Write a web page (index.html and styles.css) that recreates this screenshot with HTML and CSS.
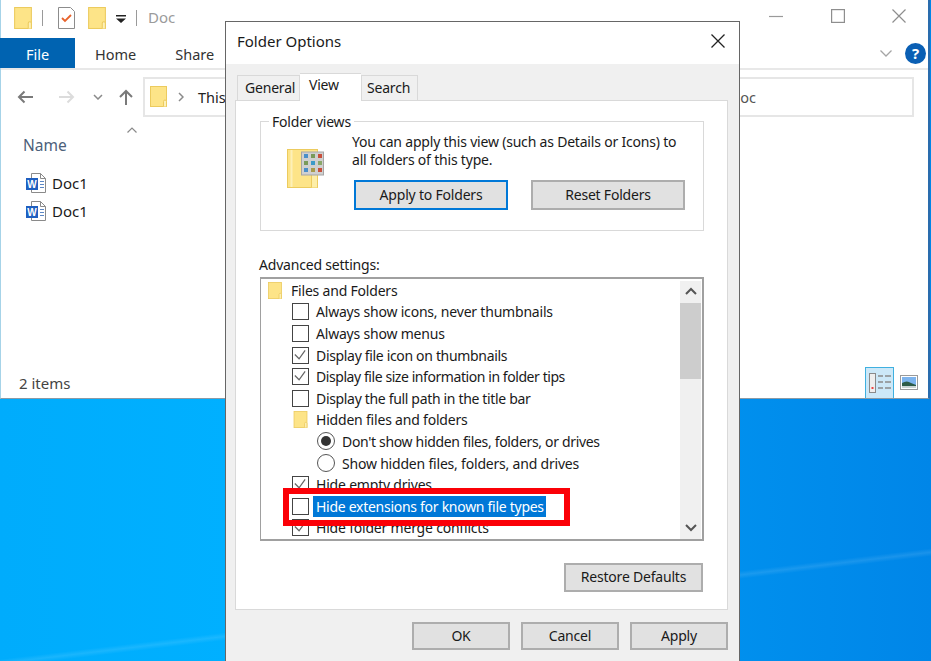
FILE: index.html
```html
<!DOCTYPE html>
<html lang="en">
<head>
<meta charset="utf-8">
<title>Folder Options</title>
<link rel="stylesheet" href="styles.css">
</head>
<body>
<svg class="defs" width="0" height="0" aria-hidden="true">
  <defs>
    <symbol id="folder" viewBox="0 0 17 21">
      <rect x=".5" y=".5" width="16" height="20" fill="#fde488" stroke="#eccb5e"/>
      <path d="M13.500 20.500v-5a1.500 1.500 0 0 1 3 0v5" fill="#fdf0b8" stroke="#eccb5e"/>
    </symbol>
    <symbol id="word" viewBox="0 0 22 22">
      <path d="M6.500 1.500h9l5 5v14h-14z" fill="#fff" stroke="#8a8a8a"/>
      <path d="M15.500 1.500v5h5" fill="none" stroke="#8a8a8a"/>
      <path d="M15 9.500h4M15 12.500h4M15 15.500h4" stroke="#5c87c4"/>
      <rect x="1" y="6" width="12" height="12" fill="#1f5fc0"/>
      <text x="7" y="15.500" class="word-letter">W</text>
    </symbol>
    <symbol id="check" viewBox="0 0 15 15">
      <path d="M2 7l4.500 4.500 6.500-9" fill="none" stroke="#666" stroke-width="1.300"/>
    </symbol>
  </defs>
</svg>

<main class="desktop">
  <section class="explorer">
    <header class="titlebar">
      <svg class="ico-title"><use href="#folder"/></svg>
      <span class="pipe"></span>
      <svg class="ico-props" viewBox="0 0 17 22">
        <path d="M.5.500h12l4 4v17H.5z" fill="#fff" stroke="#8c8c8c"/>
        <path d="M4 11l3 3 6-6" fill="none" stroke="#e8632c" stroke-width="1.800"/>
      </svg>
      <svg class="ico-title ico-second"><use href="#folder"/></svg>
      <svg class="ico-qat" viewBox="0 0 10 9">
        <path d="M0 0h10v1.500H0zM0 3.500h10L5 8z" fill="#222"/>
      </svg>
      <span class="pipe pipe-second"></span>
      <span class="win-title">Doc</span>
      <div class="win-controls">
        <svg class="ctl" viewBox="0 0 14 14"><path d="M0 7.500h14" stroke="#9a9a9a" stroke-width="1.200"/></svg>
        <svg class="ctl" viewBox="0 0 14 14"><rect x=".6" y=".6" width="12.800" height="12.800" fill="none" stroke="#8e8e8e" stroke-width="1.200"/></svg>
        <svg class="ctl" viewBox="0 0 14 14"><path d="M.5.500l13 13M13.500.500l-13 13" stroke="#8e8e8e" stroke-width="1.200"/></svg>
      </div>
    </header>

    <nav class="ribbon">
      <span class="tab-file">File</span>
      <span class="tab-home">Home</span>
      <span class="tab-share">Share</span>
      <svg class="ribbon-chevron" viewBox="0 0 12 7"><path d="M.5.500L6 6l5.500-5.500" fill="none" stroke="#a5a5a5" stroke-width="1.300"/></svg>
      <span class="help">?</span>
    </nav>

    <div class="navbar">
      <svg class="nav-ico" viewBox="0 0 16 14"><path d="M16 7H2M7.500 1.500L2 7l5.500 5.500" fill="none" stroke="#7a7a7a" stroke-width="2"/></svg>
      <svg class="nav-ico nav-forward" viewBox="0 0 16 14"><path d="M0 7h14M8.500 1.500L14 7l-5.500 5.500" fill="none" stroke="#dcdcdc" stroke-width="2"/></svg>
      <svg class="nav-drop" viewBox="0 0 10 6"><path d="M1 1l4 4 4-4" fill="none" stroke="#8a8a8a" stroke-width="1.500"/></svg>
      <svg class="nav-ico nav-up" viewBox="0 0 16 16"><path d="M8 16V2M2 8l6-6 6 6" fill="none" stroke="#7a7a7a" stroke-width="2"/></svg>
      <div class="address">
        <svg class="ico-addr"><use href="#folder"/></svg>
        <svg class="addr-sep" viewBox="0 0 6 10"><path d="M1 1l4 4-4 4" fill="none" stroke="#8a8a8a" stroke-width="1.500"/></svg>
        <span class="addr-text">This</span>
        <span class="addr-end">oc</span>
      </div>
    </div>

    <div class="files">
      <svg class="sort-caret" viewBox="0 0 10 6"><path d="M.5 5.500L5 1l4.500 4.500" fill="none" stroke="#8a8a8a" stroke-width="1.200"/></svg>
      <div class="col-name">Name</div>
      <div class="file"><svg class="ico-word"><use href="#word"/></svg>Doc1</div>
      <div class="file"><svg class="ico-word"><use href="#word"/></svg>Doc1</div>
    </div>

    <footer class="statusbar">
      <span>2 items</span>
      <div class="views">
        <span class="view-details">
          <svg viewBox="0 0 24 24" width="24" height="24">
            <rect x="1.500" y="2.500" width="6" height="19" fill="#eee" stroke="#8a8a8a"/>
            <path d="M10 5h5M17 5h6M10 11h5M17 11h6M10 17h5M17 17h6" stroke="#8a8a8a" stroke-width="1.500"/>
            <rect x="3.500" y="16" width="2" height="2" fill="#e44"/>
          </svg>
        </span>
        <svg class="view-large" viewBox="0 0 18 15">
          <rect x=".5" y=".5" width="17" height="14" fill="#fff" stroke="#9a9a9a"/>
          <rect x="2" y="2" width="14" height="11" fill="#7db4ee"/>
          <path d="M2 8q5-3 9 0l5 2v3H2z" fill="#2d5b47"/>
          <rect x="2" y="11" width="14" height="2" fill="#c9d3d3"/>
        </svg>
      </div>
    </footer>
  </section>

  <section class="dialog">
    <header class="dlg-title">
      <span>Folder Options</span>
      <svg class="dlg-close" viewBox="0 0 14 14"><path d="M.5.500l13 13M13.500.500l-13 13" stroke="#222" stroke-width="1.300"/></svg>
    </header>
    <div class="dlg-body">
      <div class="tabs">
        <span class="tab tab-general">General</span>
        <span class="tab tab-active">View</span>
        <span class="tab tab-search">Search</span>
      </div>
      <div class="panel">
        <fieldset class="group">
          <legend>Folder views</legend>
          <svg class="ico-views" viewBox="0 0 37 39">
            <rect x=".5" y=".5" width="30" height="38" fill="#fde488" stroke="#eccb5e"/>
            <path d="M24.500 38.500V8h6v30.500" fill="#fdeea8" stroke="#eccb5e"/>
            <path d="M4.500 1v37" stroke="#fdf0b8" stroke-width="2"/>
            <rect x="14.500" y="3" width="22" height="23" fill="#d0d0d0" stroke="#a5a5a5"/>
            <rect x="17" y="5" width="4" height="4" fill="#4a8fc8"/><rect x="24" y="5" width="4" height="4" fill="#7a9a5a"/><rect x="31" y="5" width="4" height="4" fill="#c8503c"/>
            <rect x="17" y="12" width="4" height="4" fill="#7a9a5a"/><rect x="24" y="12" width="4" height="4" fill="#3c9ac8"/><rect x="31" y="12" width="4" height="4" fill="#8aa86a"/>
            <rect x="17" y="19" width="4" height="4" fill="#4a8fc8"/><rect x="24" y="19" width="4" height="4" fill="#a89a4c"/><rect x="31" y="19" width="4" height="4" fill="#c8503c"/>
          </svg>
          <div class="views-right">
            <p class="views-text">You can apply this view (such as Details or Icons) to<br>all folders of this type.</p>
            <div class="views-btns">
              <button class="btn btn-default" type="button">Apply to Folders</button>
              <button class="btn btn-reset" type="button">Reset Folders</button>
            </div>
          </div>
        </fieldset>

        <div class="adv-label">Advanced settings:</div>
        <div class="list">
          <div class="rows">
            <div class="row"><svg class="ico-list"><use href="#folder"/></svg><span class="t-root">Files and Folders</span></div>
            <div class="row lvl1"><i class="cb"></i><span class="t">Always show icons, never thumbnails</span></div>
            <div class="row lvl1"><i class="cb"></i><span class="t">Always show menus</span></div>
            <div class="row lvl1"><i class="cb"><svg><use href="#check"/></svg></i><span class="t t-tight">Display file icon on thumbnails</span></div>
            <div class="row lvl1"><i class="cb"><svg><use href="#check"/></svg></i><span class="t t-tighter">Display file size information in folder tips</span></div>
            <div class="row lvl1"><i class="cb"></i><span class="t t-tight">Display the full path in the title bar</span></div>
            <div class="row lvl1"><svg class="ico-list ico-sub"><use href="#folder"/></svg><span class="t">Hidden files and folders</span></div>
            <div class="row lvl2"><i class="rb rb-on"></i><span class="t t-tight">Don't show hidden files, folders, or drives</span></div>
            <div class="row lvl2"><i class="rb"></i><span class="t">Show hidden files, folders, and drives</span></div>
            <div class="row lvl1"><i class="cb"><svg><use href="#check"/></svg></i><span class="t">Hide empty drives</span></div>
            <div class="row lvl1"><i class="cb"></i><span class="t t-sel">Hide extensions for known file types</span></div>
            <div class="row lvl1"><i class="cb"><svg><use href="#check"/></svg></i><span class="t">Hide folder merge conflicts</span></div>
          </div>
          <div class="scrollbar">
            <svg class="sb-arrow" viewBox="0 0 12 8"><path d="M1 7l5-5 5 5" fill="none" stroke="#555" stroke-width="2"/></svg>
            <div class="sb-thumb"></div>
            <svg class="sb-arrow sb-down" viewBox="0 0 12 8"><path d="M1 1l5 5 5-5" fill="none" stroke="#555" stroke-width="2"/></svg>
          </div>
          <div class="callout"></div>
        </div>
        <div class="restore-row"><button class="btn btn-restore" type="button">Restore Defaults</button></div>
      </div>
      <div class="dlg-actions">
        <button class="btn btn-act" type="button">OK</button>
        <button class="btn btn-act" type="button">Cancel</button>
        <button class="btn btn-act" type="button">Apply</button>
      </div>
    </div>
  </section>
</main>
</body>
</html>
```
FILE: styles.css
```css
* { box-sizing: border-box; }
html, body { margin: 0; height: 100%; overflow: hidden; }
body { font-family: "Noto Sans", "Liberation Sans", sans-serif; font-size: 14.5px; color: #1a1a1a; }
.defs { position: absolute; }
.word-letter { font: bold 10px "Liberation Sans", sans-serif; fill: #fff; text-anchor: middle; }

.desktop {
  position: relative;
  width: 931px;
  height: 661px;
  overflow: hidden;
  background:
    linear-gradient(-6.8deg, transparent 104px, rgba(255, 255, 255, .1) 108px, transparent 112px),
    linear-gradient(90deg, #00acfc 0%, #00b0ff 25%, #0090ee 78%, #0086e8 100%);
}

/* Explorer window */
.explorer {
  position: absolute;
  left: 0;
  top: 0;
  width: 930px;
  height: 399px;
  background: #fff;
  border-left: 1px solid #a6d3e8;
  border-right: 2px solid #2a6cad;
  border-bottom: 1px solid #8a9aa6;
  display: flex;
  flex-direction: column;
}
.titlebar { height: 38px; display: flex; align-items: center; padding-left: 13px; }
.ico-title { width: 18px; height: 22px; margin-top: -3px; }
.pipe { width: 1px; height: 16px; background: #9a9a9a; margin: -2px 0 0 10px; }
.ico-props { width: 17px; height: 22px; margin: -2px 0 0 15px; }
.ico-second { margin-left: 13px; }
.ico-qat { width: 10px; height: 9px; margin-left: 10px; }
.pipe-second { margin-left: 10px; }
.win-title { margin: -5px 0 0 11px; color: #9b9b9b; font-size: 15px; }
.win-controls { margin-left: auto; display: flex; gap: 47.5px; padding-right: 22px; margin-top: -6px; }
.ctl { width: 14px; height: 14px; }

.ribbon { height: 32px; display: flex; align-items: center; border-bottom: 2px solid #e8e8e8; }
.tab-file { width: 75px; height: 100%; background: #0063b1; color: #fff; display: flex; align-items: center; justify-content: center; margin-left: -1px; padding-top: 2px; }
.tab-home { margin: 2px 0 0 20px; color: #333; }
.tab-share { margin: 2px 0 0 39px; color: #333; }
.ribbon-chevron { width: 12px; height: 7px; margin-left: auto; margin-right: 13px; }
.help { width: 21px; height: 21px; border-radius: 50%; background: #0a5fb4; color: #fff; font-weight: 700; font-size: 15px; display: flex; align-items: center; justify-content: center; margin-right: 2px; }

.navbar { height: 47px; display: flex; align-items: center; padding: 6px 14px 0 16px; }
.nav-ico { width: 16px; height: 14px; }
.nav-forward { margin-left: 26px; }
.nav-drop { width: 10px; height: 6px; margin-left: 18px; }
.nav-up { width: 16px; height: 16px; margin-left: 15px; }
.address { flex: 1; height: 40px; margin-left: 9px; border: 2px solid #e6e6e6; display: flex; align-items: center; padding-left: 5px; }
.ico-addr { width: 17px; height: 21px; }
.addr-sep { width: 6px; height: 10px; margin-left: 11px; }
.addr-text { margin-left: 14px; color: #222; }
.addr-end { margin-left: auto; margin-right: 156px; color: #555; }

.files { flex: 1; padding-left: 22px; position: relative; }
.sort-caret { position: absolute; left: 126px; top: 10px; width: 10px; height: 6px; }
.col-name { color: #4c607a; font-size: 15.5px; margin-top: 18px; line-height: 20px; height: 34px; }
.file { display: flex; align-items: center; height: 28px; gap: 5px; font-size: 15px; }
.ico-word { width: 22px; height: 22px; margin-left: 2px; }

.statusbar { height: 31px; display: flex; align-items: center; padding-left: 18px; color: #444; font-size: 15px; }
.views { margin-left: auto; display: flex; align-items: center; gap: 6px; padding-right: 10px; align-self: stretch; }
.view-details { width: 29px; height: 100%; background: #cce8f8; border: 1px solid #3fb0e0; border-bottom: 0; display: flex; align-items: center; justify-content: center; }
.view-large { width: 18px; height: 15px; }

/* Dialog */
.dialog {
  position: absolute;
  left: 225px;
  top: 21px;
  width: 515px;
  height: 660px;
  background: #f0f0f0;
  border: 1px solid #666;
  display: flex;
  flex-direction: column;
  font-size: 14px;
  letter-spacing: -.2px;
}
.dlg-title { height: 42px; background: #fff; display: flex; align-items: center; justify-content: space-between; padding: 0 14px 5px 11px; flex: none; font-size: 15px; letter-spacing: 0; }
.dlg-close { width: 14px; height: 14px; margin-top: 1px; }
.dlg-body { flex: 1; padding: 9px 11px 0 9px; }
.tabs { display: flex; align-items: flex-end; height: 27px; padding-left: 2px; position: relative; z-index: 1; }
.tab { height: 25px; background: #f0f0f0; border: 1px solid #d9d9d9; border-bottom: 0; line-height: 24px; }
.tab-general { width: 63px; padding-left: 7px; }
.tab-active { width: 61px; height: 28px; margin-bottom: -1px; background: #fff; padding-left: 9px; line-height: 22px; border-right: 0; border-left: 0; }
.tab-search { width: 57px; padding-left: 5px; }

.panel { background: #fff; border: 1px solid #d9d9d9; height: 510px; padding: 12px 23px 0 24px; }
.group { margin: 0; height: 118px; border: 1px solid #d9d9d9; padding: 0; display: flex; min-width: 0; }
.group legend { padding: 0 3px; margin-left: 8px; line-height: 17px; }
.ico-views { width: 37px; height: 39px; margin: 19px 0 0 26px; flex: none; }
.views-right { margin-left: 28px; }
.views-text { margin: 3px 0 0; line-height: 18px; }
.views-btns { display: flex; gap: 23px; margin: 11px 0 0 2px; }

.btn { font: inherit; letter-spacing: inherit; color: #1a1a1a; background: #e1e1e1; border: 2px solid #adadad; padding: 0 0 2px; }
.btn-default { width: 154px; height: 30px; border-color: #0078d7; }
.btn-reset { width: 154px; height: 30px; }
.btn-restore { width: 139px; height: 29px; }
.btn-act { width: 98px; height: 28px; }

.adv-label { margin: 24px 0 0 -1px; line-height: 20px; height: 22px; }
.list { position: relative; height: 264px; border: 2px solid #a0a0a0; border-width: 2px 2px 2px 1px; display: flex; overflow: hidden; }
.rows { flex: 1; overflow: hidden; margin-top: .5px; }
.row { height: 21.6px; display: flex; align-items: center; white-space: nowrap; }
.ico-list { width: 14px; height: 17px; margin-left: 7px; }
.t-root { margin-left: 9px; }
.lvl1 { padding-left: 31px; }
.lvl2 { padding-left: 56px; }
.ico-sub { width: 15px; margin: 0 1px 0 1px; }
.cb { width: 17px; height: 17px; border: 1.5px solid #444; display: block; flex: none; background: #fff; }
.cb svg { display: block; width: 14px; height: 14px; }
.rb { width: 18px; height: 18px; border-radius: 50%; border: 1.5px solid #555; flex: none; background: #fff; position: relative; }
.rb-on::after { content: ""; position: absolute; inset: 3px; border-radius: 50%; background: #333; }
.t { margin-left: 6px; padding: 0 1px; }
.t-tight { letter-spacing: -.33px; }
.t-tighter { letter-spacing: -.43px; }
.t-sel { background: #0078d7; color: #fff; margin-left: 4px; padding: 0 2px 0 3px; line-height: 21px; letter-spacing: -.28px; }
.scrollbar { width: 21px; background: #f0f0f0; display: flex; flex-direction: column; align-items: center; margin: 2px 1px 0 0; }
.sb-arrow { width: 12px; height: 8px; margin: 6px 0 8px; flex: none; }
.sb-thumb { width: 100%; height: 76px; background: #cdcdcd; flex: none; }
.sb-down { margin-top: auto; margin-bottom: 7px; }
.callout { position: absolute; left: 22px; top: 209px; width: 287px; height: 38px; border: 6px solid #fb0007; }

.restore-row { display: flex; justify-content: flex-end; margin-top: 22px; padding-right: 1px; }
.dlg-actions { display: flex; justify-content: flex-end; gap: 11px; margin-top: 12px; }
```
